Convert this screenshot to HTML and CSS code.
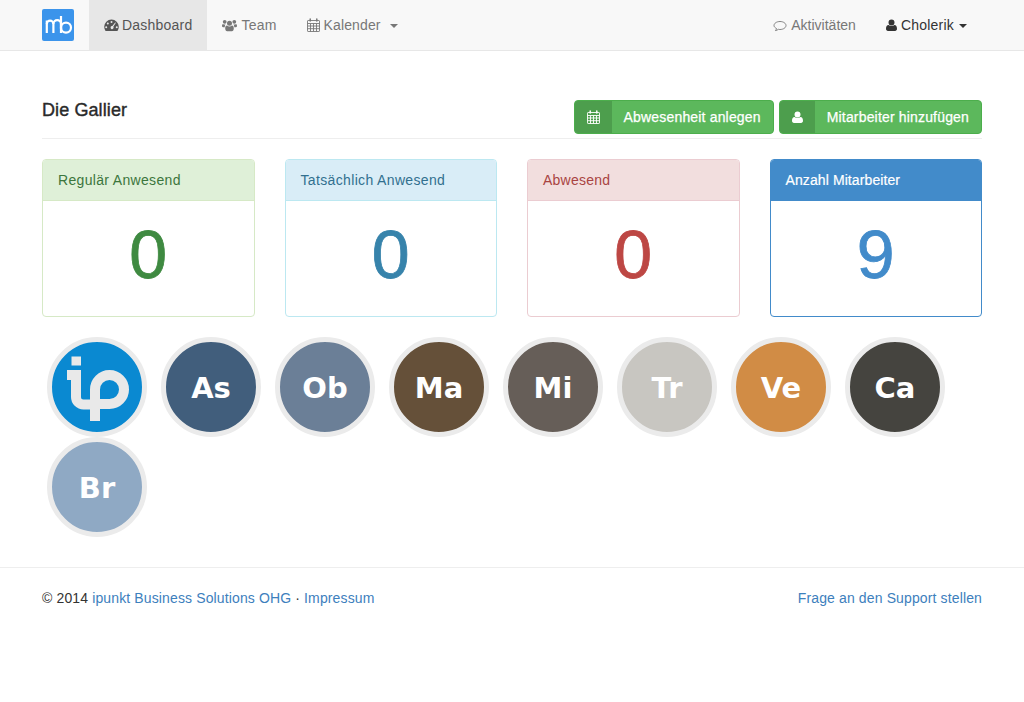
FILE: index.html
```html
<!DOCTYPE html>
<html lang="de">
<head>
<meta charset="utf-8">
<title>Die Gallier</title>
<link rel="stylesheet" href="styles.css">
</head>
<body>
<svg class="defs" width="0" height="0">
  <symbol id="i-cal" viewBox="0 0 13 14"><g fill="none" stroke="currentColor" stroke-width="0.9"><rect x="0.5" y="2.500" width="12" height="11" rx="0.6"/><path d="M0.500 5.500h12M0.500 8h12M0.500 10.700h12M3.500 5.500v8M6.500 5.500v8M9.500 5.500v8"/></g><path fill="none" stroke="currentColor" stroke-width="1.500" stroke-linecap="round" d="M3.200 1v2M9.800 1v2"/></symbol>
  <symbol id="i-user" viewBox="0 0 11 12"><path fill="currentColor" d="M5.500 0.500a3 3 0 1 1 0 6 3 3 0 0 1 0-6zM2.600 6c.7.7 1.700 1.100 2.900 1.100S7.700 6.700 8.400 6c1.700.1 2.600 1.500 2.600 3.800 0 1.300-.8 2.200-2 2.200H2c-1.200 0-2-.9-2-2.200C0 7.500.9 6.100 2.600 6z"/></symbol>
</svg>

<header class="navbar">
  <a class="logo" href="#">
    <svg class="logo-svg" viewBox="0 0 32 32"><g fill="none" stroke="#fff" stroke-width="2.200"><path d="M4.800 24V11.500"/><path d="M4.800 15a3.300 3.300 0 0 1 6.600 0v9"/><path d="M11.400 15a3.800 3.800 0 0 1 7.600 0v9"/><path d="M19 7v13"/><circle cx="24" cy="18.600" r="5"/></g></svg>
  </a>
  <nav class="nav-left">
    <a class="nav-item active" href="#">
      <svg class="ico ico-dash" viewBox="0 0 15 12"><path fill="currentColor" fill-rule="evenodd" d="M7.500 0.500a7.300 7.300 0 0 1 7.300 7.300c0 1.500-.4 2.800-1.200 3.900-.1.200-.3.300-.6.300H2c-.3 0-.5-.1-.6-.3C.6 10.600.2 9.300.2 7.800A7.300 7.300 0 0 1 7.500.5zM7.500 2a1 1 0 1 0 0 2 1 1 0 0 0 0-2zM3.800 3.600a1 1 0 1 0 0 2 1 1 0 0 0 0-2zM2.200 7.300a1 1 0 1 0 0 2 1 1 0 0 0 0-2zM12.800 7.300a1 1 0 1 0 0 2 1 1 0 0 0 0-2zM11.200 3.400 8.300 7.100a1.500 1.500 0 1 0 1 .6l2.600-3.900z"/></svg>
      <span class="nav-text">Dashboard</span>
    </a>
    <a class="nav-item" href="#">
      <svg class="ico ico-team" viewBox="0 0 15 12"><path fill="currentColor" d="M7.500 1.300a2.500 2.500 0 1 1 0 5 2.500 2.500 0 0 1 0-5zM2.700 0.400a1.900 1.900 0 1 1 0 3.800 1.900 1.900 0 0 1 0-3.800zM12.300 0.400a1.900 1.900 0 1 1 0 3.800 1.900 1.900 0 0 1 0-3.800zM5 6c.6.600 1.500 1 2.500 1s1.900-.4 2.500-1c1.200.1 1.800 1.200 1.800 3.100 0 1.600-.8 2.700-2 2.700H5.200c-1.200 0-2-1.100-2-2.700C3.200 7.200 3.800 6.100 5 6zM1 4.400c.4.400 1 .6 1.600.6.400 0 .7 0 1-.2-.3.400-.8 1.500-.9 2.900H1.100C.4 7.700 0 7.200 0 6.500c0-1 .3-2 1-2.100zM14 4.400c.7.100 1 1.100 1 2.100 0 .7-.4 1.200-1.100 1.200h-1.600c-.1-1.400-.6-2.500-.9-2.900.3.200.6.200 1 .2.600 0 1.200-.2 1.600-.6z"/></svg>
      <span class="nav-text">Team</span>
    </a>
    <a class="nav-item nav-drop" href="#">
      <svg class="ico ico-cal"><use href="#i-cal"/></svg>
      <span class="nav-text nav-text-tight">Kalender</span><span class="caret caret-wide"></span>
    </a>
  </nav>
  <nav class="nav-right">
    <a class="nav-item" href="#">
      <svg class="ico ico-bubble" viewBox="0 0 14 12"><path fill="none" stroke="currentColor" stroke-width="0.9" d="M7 1.500c3.300 0 6 1.800 6 4s-2.700 4-6 4c-.6 0-1.100 0-1.600-.2-.8.700-1.800 1.100-3 1.300.6-.7 1-1.400 1.100-2.100C2 7.700 1 6.700 1 5.500c0-2.200 2.700-4 6-4z"/></svg>
      <span>Aktivitäten</span>
    </a>
    <a class="nav-item nav-user" href="#">
      <svg class="ico ico-user"><use href="#i-user"/></svg>
      <span class="nav-text">Cholerik</span><span class="caret"></span>
    </a>
  </nav>
</header>

<main class="container">
  <div class="page-header">
    <h1 class="title">Die Gallier</h1>
    <div class="actions">
      <a class="btn" href="#"><span class="btn-icon"><svg class="btn-svg"><use href="#i-cal"/></svg></span><span class="btn-label">Abwesenheit anlegen</span></a>
      <a class="btn" href="#"><span class="btn-icon"><svg class="btn-svg btn-svg-user"><use href="#i-user"/></svg></span><span class="btn-label">Mitarbeiter hinzufügen</span></a>
    </div>
  </div>

  <section class="panels">
    <div class="panel panel-success"><div class="panel-heading">Regulär Anwesend</div><div class="panel-body">0</div></div>
    <div class="panel panel-info"><div class="panel-heading">Tatsächlich Anwesend</div><div class="panel-body">0</div></div>
    <div class="panel panel-danger"><div class="panel-heading">Abwesend</div><div class="panel-body">0</div></div>
    <div class="panel panel-primary"><div class="panel-heading">Anzahl Mitarbeiter</div><div class="panel-body">9</div></div>
  </section>

  <section class="avatars">
    <div class="avatar av-ip">
      <svg class="ip-logo" viewBox="0 0 90 90"><g fill="none" stroke="#e9e9e9" stroke-width="10"><path d="M15 33H24V55a7.500 7.500 0 0 0 7.500 7.500H43"/><path d="M43 79V47.500a14.500 14.500 0 1 1 14.500 14.500H43"/></g><rect x="19.500" y="14.500" width="9.500" height="9" fill="#e9e9e9"/></svg>
    </div>
    <div class="avatar av-as">As</div>
    <div class="avatar av-ob">Ob</div>
    <div class="avatar av-ma">Ma</div>
    <div class="avatar av-mi">Mi</div>
    <div class="avatar av-tr">Tr</div>
    <div class="avatar av-ve">Ve</div>
    <div class="avatar av-ca">Ca</div>
    <div class="avatar av-br">Br</div>
  </section>
</main>

<footer class="footer">
  <div class="footer-inner">
    <div>© 2014 <a href="#">ipunkt Business Solutions OHG</a> · <a href="#">Impressum</a></div>
    <a href="#">Frage an den Support stellen</a>
  </div>
</footer>
</body>
</html>
```
FILE: styles.css
```css
* { box-sizing: border-box; }
html, body { margin: 0; padding: 0; }
body {
  font-family: "Liberation Sans", Arial, sans-serif;
  font-size: 14px;
  line-height: 20px;
  color: #333;
  background: #fff;
}
a { color: #3d80bd; text-decoration: none; }
.defs { position: absolute; }

.navbar {
  display: flex;
  height: 51px;
  padding: 0 42px;
  background: #f8f8f8;
  border-bottom: 1px solid #e7e7e7;
}
.logo {
  width: 32px;
  height: 32px;
  margin-top: 9px;
  margin-right: 15px;
  border-radius: 2px;
  background: #3b94eb;
  display: block;
}
.logo-svg { display: block; width: 32px; height: 32px; }
.nav-left, .nav-right { display: flex; }
.nav-right { margin-left: auto; }
.nav-item {
  display: flex;
  align-items: center;
  height: 50px;
  padding: 0 15px;
  color: #777;
}
.nav-item.active { background: #e7e7e7; color: #555; }
.nav-user { color: #333; }
.nav-text { letter-spacing: 0.22px; }
.nav-text-tight { letter-spacing: 0.12px; }
.ico { flex: none; margin-right: 4px; color: inherit; }
.ico-dash { width: 15px; height: 12px; margin-right: 3px; }
.ico-team { width: 15px; height: 13px; }
.ico-cal { width: 13px; height: 14px; }
.ico-bubble { width: 14px; height: 12px; margin-top: 1px; }
.ico-user { width: 11px; height: 12px; }
.caret {
  width: 0;
  height: 0;
  margin-left: 5px;
  border-top: 4px solid currentColor;
  border-left: 4px solid transparent;
  border-right: 4px solid transparent;
  margin-top: 1px;
}
.caret-wide { margin-left: 9px; }

.container { padding: 0 42px; }
.page-header {
  display: flex;
  justify-content: space-between;
  align-items: flex-start;
  height: 88px;
  padding-top: 49px;
  border-bottom: 1px solid #eee;
}
.title {
  margin: 0;
  font-size: 18px;
  line-height: 20px;
  font-weight: 500;
  letter-spacing: 0.1px;
  color: #2a2a2a;
  -webkit-text-stroke: 0.4px #2a2a2a;
}
.actions { display: flex; gap: 5px; }
.btn {
  display: flex;
  height: 34px;
  background: #5cb85c;
  border: 1px solid #4cae4c;
  border-radius: 4px;
  color: #fff;
  overflow: hidden;
}
.btn-icon {
  display: flex;
  align-items: center;
  justify-content: center;
  background: #4d9e4d;
  color: #fff;
  width: 37px;
}
.btn:last-child .btn-icon { width: 35px; }
.btn-svg { width: 13px; height: 14px; }
.btn-svg-user { width: 11px; height: 12px; }
.btn-label {
  padding: 0 12px;
  line-height: 32px;
  letter-spacing: 0.17px;
  -webkit-text-stroke: 0.25px #fff;
}

.panels {
  display: grid;
  grid-template-columns: repeat(4, 1fr);
  gap: 30px;
  margin-top: 20px;
}
.panel {
  height: 158px;
  border: 1px solid #ddd;
  border-radius: 4px;
  overflow: hidden;
  background: #fff;
}
.panel-heading {
  height: 41px;
  padding: 10px 15px;
  border-bottom: 1px solid #ddd;
}
.panel-body {
  font-size: 68px;
  line-height: 80px;
  text-align: center;
  padding-top: 13px;
  -webkit-text-stroke: 0.8px currentColor;
}
.panel-success { border-color: #d6e9c6; }
.panel-success .panel-heading { background: #dff0d8; color: #3c763d; border-color: #d6e9c6; letter-spacing: 0.33px; }
.panel-success .panel-body { color: #3f8a41; }
.panel-info { border-color: #bce8f1; }
.panel-info .panel-heading { background: #d9edf7; color: #31708f; border-color: #bce8f1; letter-spacing: 0.35px; }
.panel-info .panel-body { color: #3783ab; }
.panel-danger { border-color: #ebccd1; }
.panel-danger .panel-heading { background: #f2dede; color: #a94442; border-color: #ebccd1; letter-spacing: 0.25px; }
.panel-danger .panel-body { color: #bd4744; }
.panel-primary { border-color: #428bca; }
.panel-primary .panel-heading { background: #428bca; color: #fff; border-color: #428bca; letter-spacing: 0.1px; -webkit-text-stroke: 0.2px #fff; }
.panel-primary .panel-body { color: #428bca; }

.avatars {
  display: flex;
  flex-wrap: wrap;
  column-gap: 14px;
  margin-top: 20px;
  padding-left: 5px;
  padding-bottom: 30px;
}
.avatar {
  width: 100px;
  height: 100px;
  border-radius: 50%;
  border: 5px solid #ebebeb;
  display: flex;
  align-items: center;
  justify-content: center;
  font-family: "DejaVu Sans", sans-serif;
  font-weight: 700;
  font-size: 29px;
  padding-top: 2px;
  color: #fff;
  overflow: hidden;
}
.av-ip { background: #0a89d1; padding: 0; }
.av-as { background: #415e7c; }
.av-ob { background: #6b7f97; }
.av-ma { background: #655039; }
.av-mi { background: #665e58; }
.av-tr { background: #c8c6c1; }
.av-ve { background: #d18c45; }
.av-ca { background: #45443f; }
.av-br { background: #8fa9c4; }
.ip-logo { width: 90px; height: 90px; flex: none; display: block; }

.footer { border-top: 1px solid #eee; padding-top: 20px; }
.footer-inner {
  display: flex;
  justify-content: space-between;
  padding: 0 42px;
  letter-spacing: 0.13px;
}
```
